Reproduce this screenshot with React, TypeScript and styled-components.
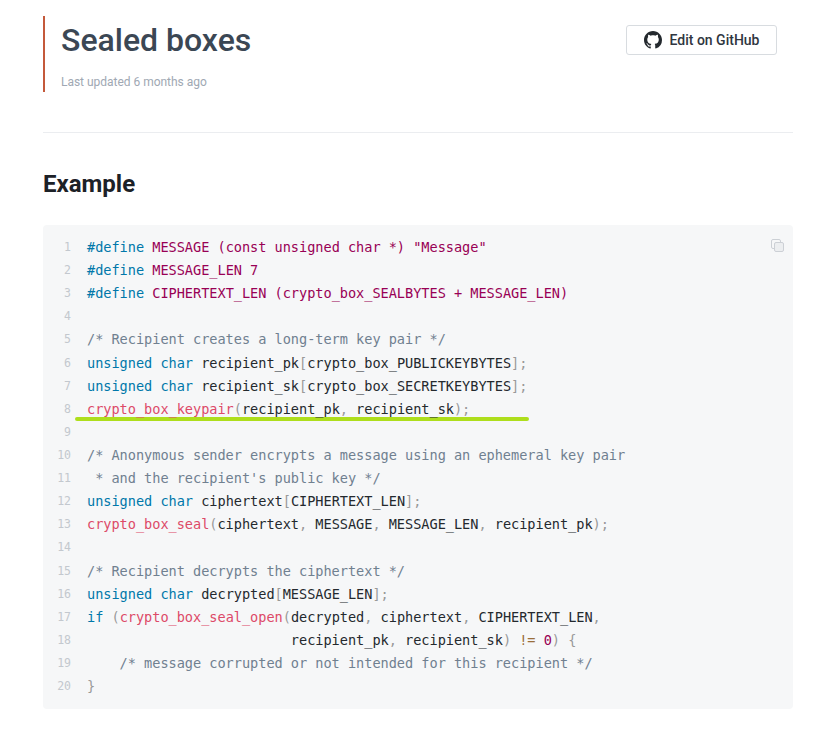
import React from 'react';
import styled, { createGlobalStyle } from 'styled-components';

const GlobalStyle = createGlobalStyle`
    html, body {
        margin: 0;
        padding: 0;
        background: #fff;
    }
    body {
        font-family: Roboto, "Liberation Sans", sans-serif;
        color: #1c1e21;
    }
`;

const Page = styled.div`
    box-sizing: border-box;
    width: 834px;
    height: 748px;
    padding: 16px 41px 0 43px;
    overflow: hidden;
`;

const Header = styled.header`
    display: flex;
    justify-content: space-between;
    align-items: flex-start;
    padding-bottom: 40px;
    border-bottom: 1px solid #ebedf0;
`;

const TitleBlock = styled.div`
    box-sizing: border-box;
    height: 76px;
    padding-left: 16px;
    border-left: 2px solid #c4593b;
`;

const Title = styled.h1`
    margin: 0;
    font-size: 32px;
    line-height: 48px;
    font-weight: 500;
    color: #3b4754;
`;

const Updated = styled.div`
    margin-top: 10px;
    font-size: 12px;
    letter-spacing: -0.02px;
    line-height: 16px;
    color: #a0a8b3;
`;

const EditButton = styled.a`
    box-sizing: border-box;
    display: flex;
    align-items: center;
    justify-content: center;
    gap: 8px;
    width: 151px;
    height: 30px;
    margin: 9px 16px 0 0;
    background: #fff;
    border: 1px solid #d8dce0;
    border-radius: 3px;
    font-size: 14px;
    font-weight: 500;
    color: #2f3640;
`;

const SectionTitle = styled.h2`
    margin: 34px 0 24px;
    font-size: 24px;
    line-height: 34px;
    font-weight: 700;
    color: #1c2127;
`;

const CodeBox = styled.div`
    position: relative;
    box-sizing: border-box;
    height: 484px;
    padding: 11px 0 0;
    background: #f6f7f8;
    border-radius: 4px;
`;

const CopyButton = styled.svg`
    position: absolute;
    top: 14px;
    right: 9px;
    width: 13px;
    height: 13px;
`;

const Marker = styled.div`
    position: absolute;
    top: 192px;
    left: 32px;
    width: 454px;
    height: 4px;
    background: #aede1c;
    border-radius: 2px;
`;

const Line = styled.div`
    position: relative;
    display: flex;
    height: 23.12px;
    line-height: 23.12px;
    font-family: "DejaVu Sans Mono", "Liberation Mono", monospace;
    font-size: 13.6px;
    letter-spacing: -0.03px;
    white-space: pre;
`;

const LineNumber = styled.span`
    flex: none;
    width: 28px;
    margin-right: 16px;
    text-align: right;
    font-size: 11.5px;
    color: #c3c8ce;
`;

const Plain = styled.span`color: #24292e;`;
const Punct = styled.span`color: #999;`;
const Keyword = styled.span`color: #0077aa;`;
const Macro = styled.span`color: #990055;`;
const Func = styled.span`color: #dd4a68;`;
const Comment = styled.span`color: #708090;`;
const Operator = styled.span`color: #9a6e3a;`;

const GithubIcon = () => (
    <svg width="18" height="18" viewBox="0 0 16 16" fill="#24292e">
        <path d="M8 0C3.58 0 0 3.58 0 8c0 3.54 2.29 6.53 5.47 7.59.4.07.55-.17.55-.38 0-.19-.01-.82-.01-1.49-2.01.37-2.53-.49-2.69-.94-.09-.23-.48-.94-.82-1.13-.28-.15-.68-.52-.01-.53.63-.01 1.08.58 1.23.82.72 1.21 1.87.87 2.33.66.07-.52.28-.87.51-1.07-1.78-.2-3.64-.89-3.64-3.95 0-.87.31-1.59.82-2.15-.08-.2-.36-1.02.08-2.12 0 0 .67-.21 2.2.82.64-.18 1.32-.27 2-.27s1.36.09 2 .27c1.53-1.04 2.2-.82 2.2-.82.44 1.1.16 1.92.08 2.12.51.56.82 1.27.82 2.15 0 3.07-1.87 3.75-3.65 3.95.29.25.54.73.54 1.48 0 1.07-.01 1.93-.01 2.2 0 .21.15.46.55.38A8.01 8.01 0 0 0 16 8c0-4.42-3.58-8-8-8z" />
    </svg>
);

const lines: React.ReactNode[] = [
    <><Keyword>#define</Keyword><Macro> MESSAGE (const unsigned char *) "Message"</Macro></>,
    <><Keyword>#define</Keyword><Macro> MESSAGE_LEN 7</Macro></>,
    <><Keyword>#define</Keyword><Macro> CIPHERTEXT_LEN (crypto_box_SEALBYTES + MESSAGE_LEN)</Macro></>,
    null,
    <Comment>/* Recipient creates a long-term key pair */</Comment>,
    <><Keyword>unsigned</Keyword> <Keyword>char</Keyword><Plain> recipient_pk</Plain><Punct>[</Punct><Plain>crypto_box_PUBLICKEYBYTES</Plain><Punct>];</Punct></>,
    <><Keyword>unsigned</Keyword> <Keyword>char</Keyword><Plain> recipient_sk</Plain><Punct>[</Punct><Plain>crypto_box_SECRETKEYBYTES</Plain><Punct>];</Punct></>,
    <><Func>crypto_box_keypair</Func><Punct>(</Punct><Plain>recipient_pk</Plain><Punct>,</Punct><Plain> recipient_sk</Plain><Punct>);</Punct></>,
    null,
    <Comment>/* Anonymous sender encrypts a message using an ephemeral key pair</Comment>,
    <Comment> * and the recipient's public key */</Comment>,
    <><Keyword>unsigned</Keyword> <Keyword>char</Keyword><Plain> ciphertext</Plain><Punct>[</Punct><Plain>CIPHERTEXT_LEN</Plain><Punct>];</Punct></>,
    <><Func>crypto_box_seal</Func><Punct>(</Punct><Plain>ciphertext</Plain><Punct>,</Punct><Plain> MESSAGE</Plain><Punct>,</Punct><Plain> MESSAGE_LEN</Plain><Punct>,</Punct><Plain> recipient_pk</Plain><Punct>);</Punct></>,
    null,
    <Comment>/* Recipient decrypts the ciphertext */</Comment>,
    <><Keyword>unsigned</Keyword> <Keyword>char</Keyword><Plain> decrypted</Plain><Punct>[</Punct><Plain>MESSAGE_LEN</Plain><Punct>];</Punct></>,
    <><Keyword>if</Keyword> <Punct>(</Punct><Func>crypto_box_seal_open</Func><Punct>(</Punct><Plain>decrypted</Plain><Punct>,</Punct><Plain> ciphertext</Plain><Punct>,</Punct><Plain> CIPHERTEXT_LEN</Plain><Punct>,</Punct></>,
    <><Plain>                         recipient_pk</Plain><Punct>,</Punct><Plain> recipient_sk</Plain><Punct>)</Punct> <Operator>!=</Operator> <Macro>0</Macro><Punct>)</Punct> <Punct>{'{'}</Punct></>,
    <Comment>    /* message corrupted or not intended for this recipient */</Comment>,
    <Punct>{'}'}</Punct>,
];

export default function App() {
    return (
        <Page>
            <GlobalStyle />
            <Header>
                <TitleBlock>
                    <Title>Sealed boxes</Title>
                    <Updated>Last updated 6 months ago</Updated>
                </TitleBlock>
                <EditButton>
                    <GithubIcon />
                    Edit on GitHub
                </EditButton>
            </Header>
            <SectionTitle>Example</SectionTitle>
            <CodeBox>
                <CopyButton viewBox="0 0 13 13" fill="none" stroke="#ccd0d5" strokeWidth="1">
                    <path d="M3 9.5H2A1.5 1.5 0 0 1 .5 8V2A1.5 1.5 0 0 1 2 .5h6A1.5 1.5 0 0 1 9.5 2v1" />
                    <rect x="3.5" y="3.5" width="9" height="9" rx="1.5" fill="#eceef0" />
                </CopyButton>
                <Marker />
                {lines.map((content, i) => (
                    <Line key={i}>
                        <LineNumber>{i + 1}</LineNumber>
                        <span>{content}</span>
                    </Line>
                ))}
            </CodeBox>
        </Page>
    );
}
